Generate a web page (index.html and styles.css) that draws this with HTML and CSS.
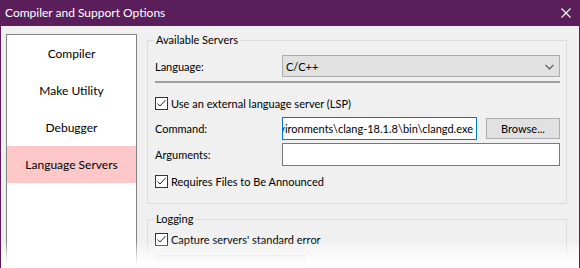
FILE: index.html
```html
<!DOCTYPE html>
<html>
<head>
<meta charset="utf-8">
<link rel="stylesheet" href="styles.css">
</head>
<body>
<div class="window">
  <div class="titlebar">
    <span class="title">Compiler and Support Options</span>
    <svg class="close" width="10" height="10" viewBox="0 0 10 10"><path d="M0.5 0.5 L9.5 9.5 M9.5 0.5 L0.5 9.5" stroke="#fff" stroke-width="1.1" fill="none"/></svg>
  </div>
  <div class="body">
    <ul class="nav">
      <li>Compiler</li>
      <li>Make Utility</li>
      <li>Debugger</li>
      <li class="selected">Language Servers</li>
    </ul>
    <div class="panel">
      <fieldset class="group servers">
        <legend>Available Servers</legend>
        <div class="row lang-row">
          <span class="label">Language:</span>
          <div class="combo"><span>C/C++</span>
            <svg width="9" height="6" viewBox="0 0 9 6"><path d="M0.5 0.8 L4.5 4.8 L8.5 0.8" stroke="#555" stroke-width="1.2" fill="none"/></svg>
          </div>
        </div>
        <div class="sep"></div>
        <label class="check first">
          <span class="box"><svg width="11" height="11" viewBox="0 0 11 11"><path d="M1.5 5.5 L4 8 L9.5 2" stroke="#222" stroke-width="1" fill="none"/></svg></span>
          <span>Use an external language server (LSP)</span>
        </label>
        <div class="row cmd-row">
          <span class="label">Command:</span>
          <div class="textbox active"><span>vironments\clang-18.1.8\bin\clangd.exe</span></div>
          <div class="button">Browse...</div>
        </div>
        <div class="row args-row">
          <span class="label">Arguments:</span>
          <div class="textbox wide"></div>
        </div>
        <label class="check second">
          <span class="box"><svg width="11" height="11" viewBox="0 0 11 11"><path d="M1.5 5.5 L4 8 L9.5 2" stroke="#222" stroke-width="1" fill="none"/></svg></span>
          <span>Requires Files to Be Announced</span>
        </label>
      </fieldset>
      <fieldset class="group logging">
        <legend>Logging</legend>
        <label class="check">
          <span class="box"><svg width="11" height="11" viewBox="0 0 11 11"><path d="M1.5 5.5 L4 8 L9.5 2" stroke="#222" stroke-width="1" fill="none"/></svg></span>
          <span>Capture servers' standard error</span>
        </label>
        <div class="log-button"></div>
      </fieldset>
    </div>
  </div>
  <div class="fade"></div>
</div>
</body>
</html>
```
FILE: styles.css
```css
* { box-sizing: border-box; }
html, body { margin: 0; padding: 0; }
body {
  width: 580px;
  height: 268px;
  overflow: hidden;
  font-family: Lato, "Liberation Sans", sans-serif;
  font-size: 11px;
  color: #000;
  background: #fff;
}
.window {
  position: relative;
  width: 580px;
  height: 268px;
  background: #f0f0f0;
  border-left: 1px solid #5a1e5a;
  border-right: 1px solid #5a1e5a;
  display: flex;
  flex-direction: column;
  overflow: hidden;
}
.titlebar {
  height: 26px;
  flex: none;
  background: #5a1e5a;
  display: flex;
  align-items: center;
  justify-content: space-between;
  padding: 0 9px 1px 4px;
  margin: 0 -1px;
  color: #fff;
}
.title { font-size: 12px; line-height: 14px; padding-left: 1px; }
.close { display: block; margin-top: 1px; }
.body {
  flex: 1;
  display: flex;
  align-items: flex-start;
  overflow: hidden;
}
.nav {
  list-style: none;
  margin: 8px 0 0 5px;
  padding: 0;
  width: 131px;
  height: 300px;
  flex: none;
  background: #fff;
  border: 1px solid #828282;
  font-size: 12px;
}
.nav li {
  height: 37px;
  display: flex;
  align-items: center;
  justify-content: center;
  line-height: 14px;
}
.nav li.selected { background: #ffc8c8; }
.panel {
  margin: 7px 0 0 10px;
  width: 420px;
  display: flex;
  flex-direction: column;
}
.group {
  margin: 0;
  border: 1px solid #dcdcdc;
  padding: 8px 6px 15px 7px;
  min-width: 0;
}
.group legend {
  padding: 0 2px;
  margin-left: -1px;
  line-height: 14px;
}
.row {
  display: flex;
  align-items: center;
}
.label { width: 127px; flex: none; }
.lang-row { height: 22px; }
.combo {
  width: 278px;
  height: 22px;
  background: #e1e1e1;
  border: 1px solid #adadad;
  display: flex;
  align-items: center;
  justify-content: space-between;
  padding: 0 5px 0 3px;
}
.combo svg { display: block; margin-top: 1px; }
.sep {
  margin-top: 4px;
  height: 2px;
  width: 405px;
  background: #a0a0a0;
}
.check {
  display: flex;
  align-items: center;
  height: 13px;
  gap: 3px;
}
.check.first { margin-top: 14px; }
.check.second { margin-top: 9px; }
.box {
  width: 13px;
  height: 13px;
  flex: none;
  border: 1px solid #333;
  background: #fff;
  display: flex;
}
.box svg { display: block; }
.cmd-row { margin-top: 7px; height: 23px; }
.textbox {
  height: 23px;
  background: #fff;
  border: 1px solid #7a7a7a;
}
.textbox.active {
  width: 195px;
  border-color: #0078d7;
  display: flex;
  justify-content: flex-end;
  align-items: center;
  overflow: hidden;
  white-space: nowrap;
  padding-right: 3px;
}
.textbox.active span { flex: none; }
.textbox.wide { width: 278px; }
.button {
  margin-left: 9px;
  width: 74px;
  height: 21px;
  background: #e1e1e1;
  border: 1px solid #adadad;
  display: flex;
  align-items: center;
  justify-content: center;
}
.args-row { margin-top: 3px; height: 23px; }
.logging { margin-top: 8px; padding-top: 7px; }
.log-button {
  margin: 9px 0 0 2px;
  width: 149px;
  height: 23px;
  background: #e1e1e1;
  border: 1px solid #c8c8c8;
}
.fade {
  position: absolute;
  left: -1px;
  right: -1px;
  bottom: 0;
  height: 28px;
  background: linear-gradient(to bottom, rgba(255,255,255,0), rgba(255,255,255,0.85) 70%, #fff);
}
```
